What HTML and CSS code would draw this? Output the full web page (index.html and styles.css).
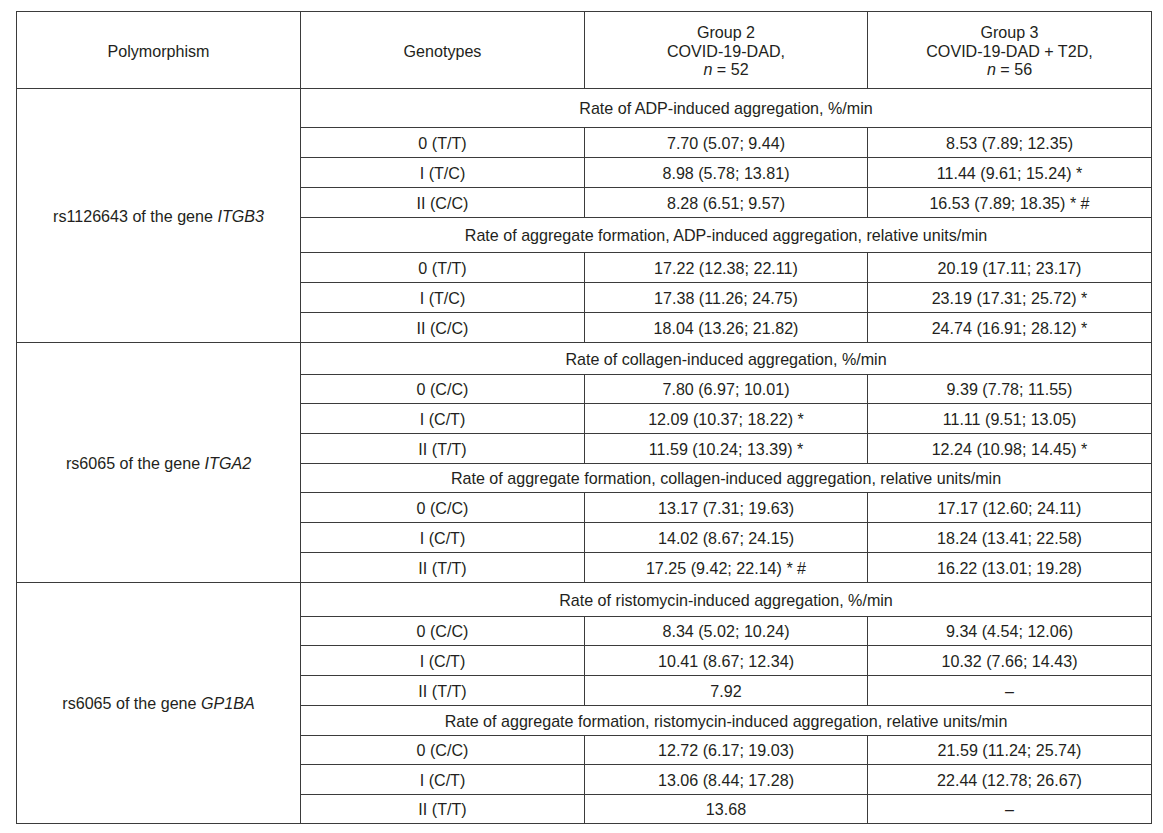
FILE: index.html
```html
<!DOCTYPE html>
<html lang="en">
<head>
<meta charset="utf-8">
<title>Aggregation table</title>
<link rel="stylesheet" href="styles.css">
</head>
<body>
<div class="table">
  <div class="c hd r1"><span>Polymorphism</span></div>
  <div class="c hd r1"><span>Genotypes</span></div>
  <div class="c hd r1"><span>Group 2<br>COVID-19-DAD,<br><i>n</i> = 52</span></div>
  <div class="c hd r1"><span>Group 3<br>COVID-19-DAD + T2D,<br><i>n</i> = 56</span></div>

  <div class="c poly s1"><span>rs1126643 of the gene <i>ITGB3</i></span></div>
  <div class="c span"><span>Rate of ADP-induced aggregation, %/min</span></div>
  <div class="c">0 (T/T)</div><div class="c">7.70 (5.07; 9.44)</div><div class="c">8.53 (7.89; 12.35)</div>
  <div class="c">I (T/C)</div><div class="c">8.98 (5.78; 13.81)</div><div class="c">11.44 (9.61; 15.24) *</div>
  <div class="c">II (C/C)</div><div class="c">8.28 (6.51; 9.57)</div><div class="c">16.53 (7.89; 18.35) * #</div>
  <div class="c span"><span>Rate of aggregate formation, ADP-induced aggregation, relative units/min</span></div>
  <div class="c">0 (T/T)</div><div class="c">17.22 (12.38; 22.11)</div><div class="c">20.19 (17.11; 23.17)</div>
  <div class="c">I (T/C)</div><div class="c">17.38 (11.26; 24.75)</div><div class="c">23.19 (17.31; 25.72) *</div>
  <div class="c">II (C/C)</div><div class="c">18.04 (13.26; 21.82)</div><div class="c">24.74 (16.91; 28.12) *</div>

  <div class="c poly s2"><span>rs6065 of the gene <i>ITGA2</i></span></div>
  <div class="c span"><span>Rate of collagen-induced aggregation, %/min</span></div>
  <div class="c">0 (C/C)</div><div class="c">7.80 (6.97; 10.01)</div><div class="c">9.39 (7.78; 11.55)</div>
  <div class="c">I (C/T)</div><div class="c">12.09 (10.37; 18.22) *</div><div class="c">11.11 (9.51; 13.05)</div>
  <div class="c">II (T/T)</div><div class="c">11.59 (10.24; 13.39) *</div><div class="c">12.24 (10.98; 14.45) *</div>
  <div class="c span"><span>Rate of aggregate formation, collagen-induced aggregation, relative units/min</span></div>
  <div class="c">0 (C/C)</div><div class="c">13.17 (7.31; 19.63)</div><div class="c">17.17 (12.60; 24.11)</div>
  <div class="c">I (C/T)</div><div class="c">14.02 (8.67; 24.15)</div><div class="c">18.24 (13.41; 22.58)</div>
  <div class="c">II (T/T)</div><div class="c">17.25 (9.42; 22.14) * #</div><div class="c">16.22 (13.01; 19.28)</div>

  <div class="c poly s3"><span>rs6065 of the gene <i>GP1BA</i></span></div>
  <div class="c span"><span>Rate of ristomycin-induced aggregation, %/min</span></div>
  <div class="c">0 (C/C)</div><div class="c">8.34 (5.02; 10.24)</div><div class="c">9.34 (4.54; 12.06)</div>
  <div class="c">I (C/T)</div><div class="c">10.41 (8.67; 12.34)</div><div class="c">10.32 (7.66; 14.43)</div>
  <div class="c">II (T/T)</div><div class="c">7.92</div><div class="c">–</div>
  <div class="c span"><span>Rate of aggregate formation, ristomycin-induced aggregation, relative units/min</span></div>
  <div class="c">0 (C/C)</div><div class="c">12.72 (6.17; 19.03)</div><div class="c">21.59 (11.24; 25.74)</div>
  <div class="c">I (C/T)</div><div class="c">13.06 (8.44; 17.28)</div><div class="c">22.44 (12.78; 26.67)</div>
  <div class="c">II (T/T)</div><div class="c">13.68</div><div class="c">–</div>
</div>
</body>
</html>
```

FILE: styles.css
```css
html, body {
  margin: 0;
  padding: 0;
  background: #ffffff;
}
body {
  padding: 11px 0 0 16px;
  font-family: "Liberation Sans", Arial, Helvetica, sans-serif;
  font-size: 16.1px;
  color: #231f20;
}
.table {
  width: 1136px;
  box-sizing: border-box;
  display: grid;
  grid-template-columns: 283px 283px 282px 283px;
  grid-template-rows: 76px 38px 29px 29px 29px 34px 29px 29px 29px 31px 28px 29px 29px 28px 29px 29px 29px 33px 28px 29px 29px 29px 28px 29px 28px;
  gap: 1px;
  padding: 1px;
  background: #3b3b3b;
}
.c {
  background: #ffffff;
  display: flex;
  align-items: center;
  justify-content: center;
  text-align: center;
  line-height: 18.5px;
  white-space: nowrap;
  padding-top: 1px;
}
.r1 {
  grid-row: 1;
  padding-top: 2px;
}
.poly {
  grid-column: 1;
}
.s1 { grid-row: 2 / 10; }
.s2 { grid-row: 10 / 18; }
.s3 { grid-row: 18 / 26; }
.span {
  grid-column: 2 / 5;
}
i {
  font-style: italic;
}
```
